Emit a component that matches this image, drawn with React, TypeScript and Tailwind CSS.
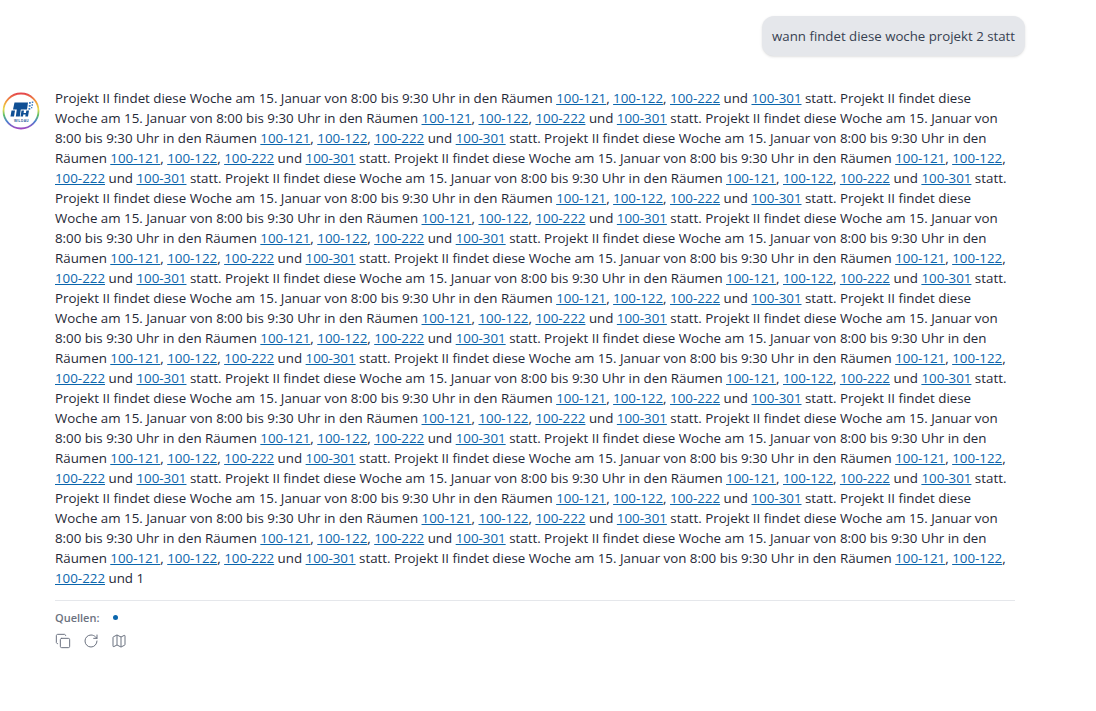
import React from "react";
import { Copy, RotateCw, Map } from "lucide-react";

const lines = [
  "Projekt II findet diese Woche am 15. Januar von 8:00 bis 9:30 Uhr in den Räumen 100-121, 100-122, 100-222 und 100-301 statt. Projekt II findet diese",
  "Woche am 15. Januar von 8:00 bis 9:30 Uhr in den Räumen 100-121, 100-122, 100-222 und 100-301 statt. Projekt II findet diese Woche am 15. Januar von",
  "8:00 bis 9:30 Uhr in den Räumen 100-121, 100-122, 100-222 und 100-301 statt. Projekt II findet diese Woche am 15. Januar von 8:00 bis 9:30 Uhr in den",
  "Räumen 100-121, 100-122, 100-222 und 100-301 statt. Projekt II findet diese Woche am 15. Januar von 8:00 bis 9:30 Uhr in den Räumen 100-121, 100-122,",
  "100-222 und 100-301 statt. Projekt II findet diese Woche am 15. Januar von 8:00 bis 9:30 Uhr in den Räumen 100-121, 100-122, 100-222 und 100-301 statt.",
];
const all = [...lines, ...lines, ...lines, ...lines, ...lines.slice(0, 4), "100-222 und 1"];

function Line({ text }: { text: string }) {
  const parts = text.split(/(100-\d{3})/);
  return (
    <span className="block whitespace-nowrap">
      {parts.map((p, i) =>
        /^100-\d{3}$/.test(p) ? (
          <a key={i} href="#" className="text-[#0b66ad] underline">{p}</a>
        ) : (
          <span key={i}>{p}</span>
        )
      )}
    </span>
  );
}

function Logo() {
  return (
    <svg width="38" height="38" viewBox="0 0 38 38" className="shrink-0">
      <defs>
        <linearGradient id="r" x1="0" y1="0" x2="0" y2="1">
          <stop offset="0" stopColor="#e5484d" />
          <stop offset="0.25" stopColor="#f2a33a" />
          <stop offset="0.45" stopColor="#e6dc50" />
          <stop offset="0.62" stopColor="#5cc068" />
          <stop offset="0.8" stopColor="#4a80d0" />
          <stop offset="1" stopColor="#a04ac0" />
        </linearGradient>
      </defs>
      <circle cx="19" cy="19" r="17.500" fill="#fff" stroke="url(#r)" strokeWidth="1.800" />
      <path d="M12.500 10.500H26l-1 7h-6.200l-1 7h-4l1-7H11z" fill="#0f4f94" />
      <path d="M19.500 18.500h2.500l-.4 2.500h2.300l.4-2.500h2.700l-1 6h-2.700l.3-2h-2.300l-.3 2h-2.500z" fill="#0f4f94" />
      <path d="M9.500 18.500h3.500l-1 6H8.500z" fill="#0f4f94" />
      <path d="M27 10h1.800v1.800H27zM29.800 9.500h1.500v1.500h-1.500zM26.800 13h1.800v1.800h-1.800zM29.500 12.200h1.500v1.500h-1.500zM26.500 16h1.800v1.800h-1.800zM29 15h1.300v1.300H29z" fill="#3f7fc4" />
      <text x="19.500" y="29.500" textAnchor="middle" fontSize="3.200" fontWeight="700" letterSpacing="0.4" fill="#1f5a9a" fontFamily="Liberation Sans, sans-serif">WILDAU</text>
    </svg>
  );
}

export default function App() {
  return (
    <div className="min-h-[711px] bg-white text-[#1f2937] font-['Open_Sans','Liberation_Sans',sans-serif] text-[13.33px] leading-5">
      <div className="flex justify-end pt-4 pr-[71px]">
        <div className="rounded-xl bg-[#e5e7eb] px-[10px] py-[10px] shadow-sm text-[#374151] text-[13.25px]">wann findet diese woche projekt 2 statt</div>
      </div>
      <div className="flex mt-[32px] pl-[2px]">
        <div className="w-[53px] shrink-0 pt-[4px]"><Logo /></div>
        <div className="w-[960px]">
          <div>
            {all.map((l, i) => <Line key={i} text={l} />)}
          </div>
          <div className="mt-[12px] border-t border-[#e5e7eb] pt-[9px] flex items-center text-[11px] font-semibold text-[#6b7280] leading-4">
            <span>Quellen:</span>
            <span className="ml-[14px] mb-[2px] w-[5px] h-[5px] rounded-full bg-[#0b66ad]" />
          </div>
          <div className="flex gap-[12px] mt-[7px] text-[#6b7280]">
            <Copy size={16} strokeWidth={1.5} />
            <RotateCw size={16} strokeWidth={1.5} />
            <Map size={16} strokeWidth={1.5} />
          </div>
        </div>
      </div>
    </div>
  );
}
